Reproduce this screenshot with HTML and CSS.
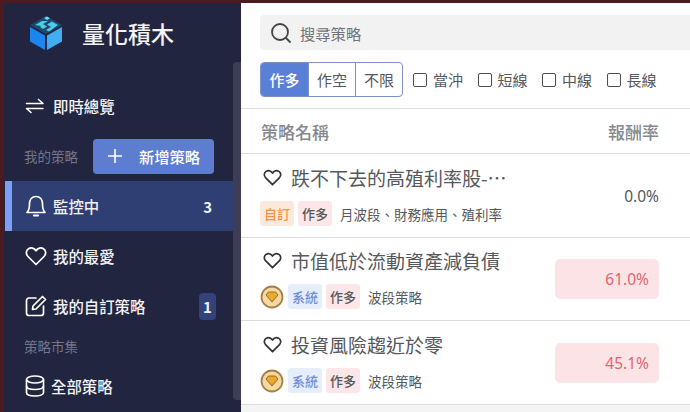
FILE: index.html
```html
<!DOCTYPE html>
<html lang="zh-Hant">
<head>
    <meta charset="UTF-8">
    <meta name="viewport" content="width=device-width, initial-scale=1.0">
    <title>量化積木</title>
    <link rel="stylesheet" href="styles.css">
</head>
<body>
    <div class="app">
        <div class="sidebar">
            <div class="brand">
                <svg class="logo" width="36" height="36" viewBox="0 0 36 36">
                    <path d="M18 1 L34 10 L18 19 L2 10 Z" fill="#1d4a6e"/>
                    <path d="M16 3 L19 1.500 L22 3.200 L19 5 Z" fill="#6fdcf0"/>
                    <path d="M7 10 L14 6 L20 6 L15 9 L19 11.500 L15 14 L12 12 L13 11 Z" fill="#4fcbe8"/>
                    <path d="M18 15 L23 12 L19 9.500 L24 6.500 L30 10 L21 16.500 Z" fill="#4fcbe8"/>
                    <path d="M2 12 L17 20.500 L17 35 L2 26.500 Z" fill="#1c86ee"/>
                    <path d="M19 20.500 L34 12 L34 26.500 L19 35 Z" fill="#42adf3"/>
                </svg>
                <span class="brand-name">量化積木</span>
            </div>

            <div class="nav-item overview">
                <svg class="icon" width="20" height="20" viewBox="0 0 20 20" fill="none" stroke="#fff" stroke-width="1.600" stroke-linecap="round" stroke-linejoin="round">
                    <path d="M1.500 7.500 H18 L13.500 3.500"/>
                    <path d="M18 12.500 H1.500 L6 16.500"/>
                </svg>
                <span>即時總覽</span>
            </div>

            <div class="section-row">
                <span class="section-title">我的策略</span>
                <div class="add-btn">
                    <svg width="16" height="16" viewBox="0 0 16 16" fill="none" stroke="#fff" stroke-width="1.600">
                        <path d="M8 1 V15 M1 8 H15"/>
                    </svg>
                    <span>新增策略</span>
                </div>
            </div>

            <div class="nav-item active">
                <svg class="icon" width="22" height="24" viewBox="0 0 22 24" fill="none" stroke="#fff" stroke-width="1.700" stroke-linejoin="round">
                    <path d="M2 18.500 C4 16.500 4.500 14.500 4.500 10 C4.500 5.500 7 2.500 11 2.500 C15 2.500 17.500 5.500 17.500 10 C17.500 14.500 18 16.500 20 18.500 Z"/>
                    <path d="M9 21.500 H13" stroke-width="2.200" stroke-linecap="round"/>
                </svg>
                <span>監控中</span>
                <span class="count">3</span>
            </div>

            <div class="nav-item">
                <svg class="icon" width="22" height="20" viewBox="0 0 22 20" fill="none" stroke="#fff" stroke-width="1.700" stroke-linejoin="round">
                    <path d="M11 18.500 L3 10.500 C0.500 8 1 4.500 3.500 2.800 C6 1.200 9.200 2 11 4.800 C12.800 2 16 1.200 18.500 2.800 C21 4.500 21.500 8 19 10.500 Z"/>
                </svg>
                <span>我的最愛</span>
            </div>

            <div class="nav-item">
                <svg class="icon" width="22" height="22" viewBox="0 0 22 22" fill="none" stroke="#fff" stroke-width="1.700" stroke-linecap="round" stroke-linejoin="round">
                    <path d="M11 3 H4 A2.500 2.500 0 0 0 1.500 5.500 V18 A2.500 2.500 0 0 0 4 20.500 H16 A2.500 2.500 0 0 0 18.500 18 V11"/>
                    <path d="M8 11 L17.500 1.500 L20.500 4.500 L11 14 L7.500 14.500 Z"/>
                </svg>
                <span>我的自訂策略</span>
                <span class="badge">1</span>
            </div>

            <div class="section-row market">
                <span class="section-title">策略市集</span>
            </div>

            <div class="nav-item all">
                <svg class="icon" width="20" height="22" viewBox="0 0 20 22" fill="none" stroke="#fff" stroke-width="1.700">
                    <ellipse cx="10" cy="4.500" rx="8.500" ry="3.500"/>
                    <path d="M1.500 4.500 V17.500 C1.500 19.500 5 21 10 21 C15 21 18.500 19.500 18.500 17.500 V4.500"/>
                    <path d="M1.500 11 C1.500 13 5 14.500 10 14.500 C15 14.500 18.500 13 18.500 11"/>
                </svg>
                <span>全部策略</span>
            </div>

            <div class="scroll-thumb"></div>
        </div>

        <div class="main">
            <div class="filters">
                <div class="search">
                    <svg width="22" height="22" viewBox="0 0 22 22" fill="none" stroke="#444" stroke-width="1.800" stroke-linecap="round">
                        <circle cx="10" cy="10" r="8"/>
                        <path d="M16 16 L20 20"/>
                    </svg>
                    <span>搜尋策略</span>
                </div>
                <div class="filter-row">
                    <div class="segment">
                        <span class="on">作多</span>
                        <span>作空</span>
                        <span>不限</span>
                    </div>
                    <label class="check"><i></i>當沖</label>
                    <label class="check"><i></i>短線</label>
                    <label class="check"><i></i>中線</label>
                    <label class="check"><i></i>長線</label>
                </div>
            </div>

            <div class="table-head">
                <span>策略名稱</span>
                <span>報酬率</span>
            </div>

            <div class="row">
                <div class="row-left">
                    <div class="row-title">
                        <svg class="heart" width="19" height="17" viewBox="0 0 22 20" fill="none" stroke="#333" stroke-width="2" stroke-linejoin="round">
                            <path d="M11 18.500 L3 10.500 C0.500 8 1 4.500 3.500 2.800 C6 1.200 9.200 2 11 4.800 C12.800 2 16 1.200 18.500 2.800 C21 4.500 21.500 8 19 10.500 Z"/>
                        </svg>
                        <span>跌不下去的高殖利率股-…</span>
                    </div>
                    <div class="row-tags">
                        <span class="tag orange">自訂</span>
                        <span class="tag pink">作多</span>
                        <span class="desc">月波段、財務應用、殖利率</span>
                    </div>
                </div>
                <div class="rate plain">0.0%</div>
            </div>

            <div class="row short">
                <div class="row-left">
                    <div class="row-title">
                        <svg class="heart" width="19" height="17" viewBox="0 0 22 20" fill="none" stroke="#333" stroke-width="2" stroke-linejoin="round">
                            <path d="M11 18.500 L3 10.500 C0.500 8 1 4.500 3.500 2.800 C6 1.200 9.200 2 11 4.800 C12.800 2 16 1.200 18.500 2.800 C21 4.500 21.500 8 19 10.500 Z"/>
                        </svg>
                        <span>市值低於流動資產減負債</span>
                    </div>
                    <div class="row-tags">
                        <svg class="medal" width="24" height="24" viewBox="0 0 24 24">
                            <circle cx="12" cy="12" r="10.500" fill="#f6d9a0" stroke="#a5804a" stroke-width="1.800"/>
                            <path d="M6 10 L8.500 7 H15.500 L18 10 L12 17 Z" fill="#eea92c" stroke="#8f6a30" stroke-width="1"/>
                        </svg>
                        <span class="tag blue">系統</span>
                        <span class="tag pink">作多</span>
                        <span class="desc">波段策略</span>
                    </div>
                </div>
                <div class="rate">61.0%</div>
            </div>

            <div class="row last">
                <div class="row-left">
                    <div class="row-title">
                        <svg class="heart" width="19" height="17" viewBox="0 0 22 20" fill="none" stroke="#333" stroke-width="2" stroke-linejoin="round">
                            <path d="M11 18.500 L3 10.500 C0.500 8 1 4.500 3.500 2.800 C6 1.200 9.200 2 11 4.800 C12.800 2 16 1.200 18.500 2.800 C21 4.500 21.500 8 19 10.500 Z"/>
                        </svg>
                        <span>投資風險趨近於零</span>
                    </div>
                    <div class="row-tags">
                        <svg class="medal" width="24" height="24" viewBox="0 0 24 24">
                            <circle cx="12" cy="12" r="10.500" fill="#f6d9a0" stroke="#a5804a" stroke-width="1.800"/>
                            <path d="M6 10 L8.500 7 H15.500 L18 10 L12 17 Z" fill="#eea92c" stroke="#8f6a30" stroke-width="1"/>
                        </svg>
                        <span class="tag blue">系統</span>
                        <span class="tag pink">作多</span>
                        <span class="desc">波段策略</span>
                    </div>
                </div>
                <div class="rate">45.1%</div>
            </div>
        </div>
    </div>
</body>
</html>
```

FILE: styles.css
```css
* {
    box-sizing: border-box;
}

html, body {
    margin: 0;
    padding: 0;
    height: 412px;
    overflow: hidden;
}

body {
    font-family: "Noto Sans CJK TC", "Noto Sans", sans-serif;
    background: #fff;
}

.app {
    display: flex;
    width: 690px;
    height: 412px;
    border-top: 3px solid #4c1a1f;
    border-left: 4px solid #4c1a1f;
    overflow: hidden;
}

/* sidebar */
.sidebar {
    position: relative;
    flex: none;
    width: 237px;
    height: 409px;
    padding-right: 8px;
    background: #22253f;
    color: #fff;
}

.scroll-thumb {
    position: absolute;
    top: 59px;
    right: 0;
    width: 8px;
    height: 338px;
    border-radius: 4px 0 0 4px;
    background: #3b3e54;
}

.brand {
    display: flex;
    align-items: center;
    height: 60px;
    padding-bottom: 1px;
    padding-left: 24px;
}

.logo {
    flex: none;
}

.brand-name {
    margin-left: 18px;
    font-size: 23px;
    font-weight: 500;
    color: #f4f4f6;
}

.nav-item {
    display: flex;
    align-items: center;
    height: 50px;
    padding-left: 21px;
    padding-right: 13px;
    font-size: 15.400px;
    font-weight: 500;
    color: #f2f2f5;
}

.nav-item .icon {
    flex: none;
    margin-right: 6px;
}

.overview {
    margin-top: 18px;
}

.overview .icon {
    margin-right: 8px;
}

.active {
    margin-left: 1px;
    padding-left: 13px;
    border-left: 7px solid #7d9ef2;
    background: #2f3e73;
}

.count {
    margin-left: auto;
    margin-right: 8px;
    font-weight: 700;
    font-size: 15px;
}

.badge {
    display: flex;
    align-items: center;
    justify-content: center;
    margin-left: auto;
    margin-right: 4px;
    width: 17px;
    height: 27px;
    border-radius: 4px;
    background: #33427a;
    font-size: 15px;
    font-weight: 700;
}

.section-row {
    display: flex;
    align-items: center;
    justify-content: space-between;
    height: 50px;
    padding: 0 19px 0 20px;
}

.section-title {
    font-size: 13.500px;
    color: #73768a;
}

.add-btn {
    display: flex;
    align-items: center;
    justify-content: center;
    gap: 16px;
    width: 121px;
    height: 35px;
    border-radius: 4px;
    background: #5d7ed0;
    font-size: 15.300px;
    font-weight: 500;
}

.market {
    height: 30px;
}

/* main column */
.main {
    flex: 1;
    min-width: 0;
    height: 409px;
    background: #f4f4f5;
}

.filters {
    padding: 12px 0 11px 19px;
    background: #fff;
    border-bottom: 1px solid #ddd;
}

.search {
    display: flex;
    align-items: center;
    gap: 8px;
    height: 35px;
    padding-left: 10px;
    border-radius: 4px 0 0 4px;
    background: #f2f2f2;
    font-size: 15.300px;
    color: #6f7276;
}

.filter-row {
    display: flex;
    align-items: center;
    margin-top: 12px;
}

.segment {
    display: flex;
    height: 35px;
    margin-right: 10px;
    border: 1px solid #7d93c4;
    border-radius: 4px;
    overflow: hidden;
    font-size: 15px;
    color: #55585c;
}

.segment span {
    display: flex;
    align-items: center;
    justify-content: center;
    width: 47px;
    border-left: 1px solid #7d93c4;
}

.segment .on {
    border-left: 0;
    background: #5a7fd6;
    color: #fff;
    font-weight: 500;
}

.check {
    display: flex;
    align-items: center;
    gap: 6px;
    margin-right: 14.500px;
    font-size: 15px;
    color: #55585c;
}

.check i {
    display: block;
    width: 14px;
    height: 14px;
    border: 1.600px solid #4b4e52;
    border-radius: 2px;
}

.table-head {
    display: flex;
    align-items: center;
    justify-content: space-between;
    height: 44px;
    padding: 0 31px 0 20px;
    background: #fff;
    font-size: 17px;
    font-weight: 500;
    color: #85888d;
}

.row {
    display: flex;
    align-items: center;
    justify-content: space-between;
    height: 84px;
    padding-right: 31px;
    padding-left: 19px;
    border-top: 1px solid #dcdcdc;
    background: #fff;
}

.short {
    height: 83px;
}

.short .row-left {
    margin-bottom: 1px;
}

.last {
    height: 85px;
    border-bottom: 1px solid #dcdcdc;
}

.row-title {
    display: flex;
    align-items: center;
    height: 26px;
    font-size: 19px;
    color: #55585c;
}

.heart {
    flex: none;
    margin-left: 3px;
    margin-right: 9px;
}

.row-tags {
    display: flex;
    align-items: center;
    margin-top: 10px;
    height: 26px;
}

.medal {
    flex: none;
    margin-right: 4px;
}

.tag {
    display: flex;
    align-items: center;
    justify-content: center;
    width: 34px;
    height: 25px;
    margin-right: 4px;
    border-radius: 3px;
    font-size: 13px;
    font-weight: 500;
}

.orange {
    background: #fde9dc;
    color: #ee9447;
}

.pink {
    background: #fce6e8;
    color: #55585c;
}

.blue {
    background: #e6edfb;
    color: #6f8fd8;
}

.desc {
    margin-left: 4px;
    font-size: 13.500px;
    color: #55585c;
}

.rate {
    display: flex;
    align-items: center;
    justify-content: flex-end;
    width: 104px;
    height: 40px;
    padding-right: 10px;
    border-radius: 5px;
    background: #fce4e6;
    font-family: "Noto Sans", sans-serif;
    font-size: 15.500px;
    color: #e0646e;
}

.plain {
    background: none;
    padding-right: 0;
    color: #55585c;
}
```
